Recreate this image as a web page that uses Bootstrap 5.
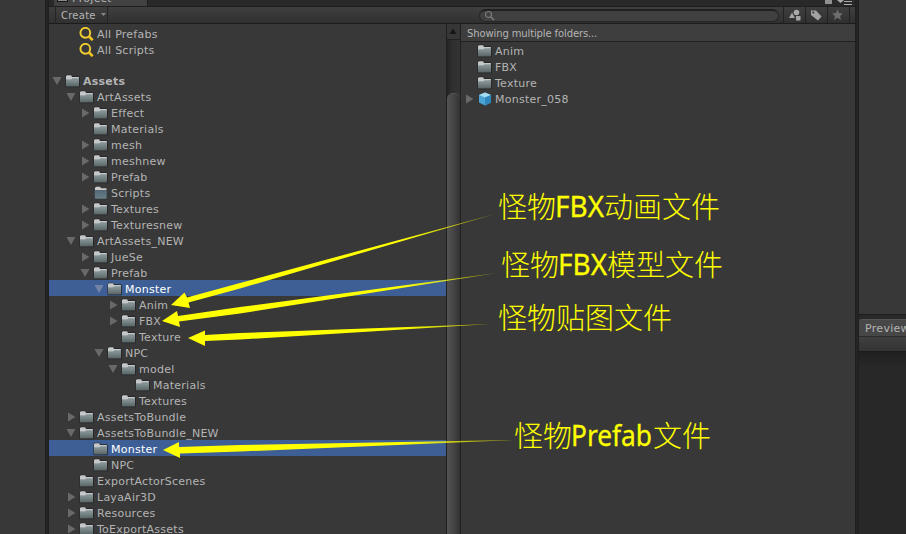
<!DOCTYPE html>
<html lang="zh-CN">
<head>
<meta charset="utf-8">
<title>Project</title>
<link href="https://cdn.jsdelivr.net/npm/bootstrap@5.3.0/dist/css/bootstrap.min.css" rel="stylesheet">
<style>
body{width:906px;height:534px;background:#383838;color:#b4b4b4;font:11px/16px "DejaVu Sans",sans-serif;letter-spacing:.25px}
.side{width:45px}
.side,.split,.panel,.tools>*{flex:none}
.split{width:4px;background:#242424;border-left:1px solid #202020;border-right:1px solid #202020}
.panel{width:806px}
.tabs{height:6px;background:#292929;padding-left:5px}
.tab-a{width:94px;height:6px;background:#424242;border-right:1px solid #1d1d1d;line-height:14px;padding-left:3px}
.tab-a span{margin-top:-8px;margin-left:4px;letter-spacing:.3px}
.tab-a i{width:11px;height:2px;background:#8a8a8a;border:1px solid #161616;border-top:0}
.tools{height:18px;background:linear-gradient(#3f3f3f,#303030);border-top:1px solid #1f1f1f;border-bottom:1px solid #1c1c1c;font-size:10px}
.create{width:53px;margin-left:6px;padding-left:5px;border-left:1px solid #252525;border-right:1px solid #252525;height:16px}
.create span{position:relative;top:1px}
.search{width:300px;height:13px;margin:2px 4px 0 371px;border-radius:7px;background:#404040;border:1px solid #252525;border-top:2px solid #202020}
.tbtn{width:22px;height:16px;border-left:1px solid #222}
.tbtn.end{width:6px}
.tree{width:397px;padding-top:1px}
.item{height:16px;flex:none;white-space:nowrap;padding:2px 0 0 var(--in)}
.item span{margin-left:4px;position:relative;top:1px}
.l0{--in:3px}.l1{--in:17px}.l2{--in:31px}.l3{--in:45px}.l4{--in:59px}.l5{--in:73px}
.gap-row{height:15px;flex:none}
.picked{background:#3e5f96;color:#fff}
.tw{width:10px;height:10px;margin-right:3px;flex:none;fill:#696969}
.picked .tw{fill:#7184a5}
.fi{width:15px;height:14px;flex:none;margin-right:-1px}
.bar{width:15px;flex:none;background:linear-gradient(90deg,#242424,#2f2f2f 40%,#333);border-left:1px solid #202020;border-right:1px solid #202020}
.bar-up{height:16px;background:#363636;border-bottom:1px solid #222}
.bar-gap{height:53px}
.thumb{border-radius:6px 6px 0 0;background:linear-gradient(90deg,#535353,#464646 45%,#333);border-top:1px solid #555}
.list{width:394px}
.list-h{height:18px;background:#3e3e3e;border-bottom:1px solid #202020;padding:2px 0 0 6px;font-size:10px;line-height:16px;letter-spacing:-.12px}
.rtop{height:315px;border-bottom:1px solid #1c1c1c}
.rgap{height:4px;background:#292929}
.pv{height:17px;background:#474747;border-top:1px solid #555;border-radius:4px 0 0 0;padding:1px 0 0 6px;letter-spacing:.3px;white-space:nowrap}
.pvbar{height:16px;background:linear-gradient(#404040,#333);border-top:1px solid #2b2b2b;border-bottom:1px solid #1c1c1c}
.pvbody{background:linear-gradient(#202020,#282828 16px)}
.note text{font-family:"Noto Sans","Noto Sans CJK SC",sans-serif;font-size:29px;fill:#ff0;stroke:#ff0;stroke-width:.3;letter-spacing:0}
.note .cj{font-family:"Noto Sans CJK SC",sans-serif;font-weight:300;stroke:none}
</style>
</head>
<body class="d-flex overflow-hidden position-relative m-0">
<svg width="0" height="0" class="position-absolute">
<defs>
<linearGradient id="fg" x1="0" y1="0" x2="0" y2="1"><stop offset="0" stop-color="#8c999b"/><stop offset="1" stop-color="#566264"/></linearGradient>
<linearGradient id="fs" x1="0" y1="0" x2="0" y2="1"><stop offset="0" stop-color="#53697a"/><stop offset="1" stop-color="#6c7f88"/></linearGradient>
<symbol id="fo" viewBox="0 0 15 14"><path d="M.5 3.500 1.500.8h5l1 1.500h6.500l.7 1v9.900h-14.200z" fill="#222"/><path d="M1 4V2.200L2 1.300h4.200l.8 1.600h6.900V7H1z" fill="#c4c8c8"/><path d="M1 6h5l1-1h7v7.600H1z" fill="url(#fg)"/><path d="M1 5.800h5.300l1-1h6.700" stroke="#78878a" stroke-width=".8" fill="none"/></symbol>
<symbol id="fp" viewBox="0 0 15 14"><path d="M2 7V2L3 .8h4l1 1.400h5.500V7z" fill="#cacaca"/><path d="M1.200 4.500H14.300L13.800 13h-12z" fill="url(#fs)" stroke="#2a3035" stroke-width=".5"/></symbol>
<symbol id="dn" viewBox="0 0 10 10"><path d="M.5 1h9L5 9z"/></symbol>
<symbol id="rt" viewBox="0 0 10 10"><path d="M2 .5v9L9.500 5z"/></symbol>
<symbol id="no" viewBox="0 0 10 10"></symbol>
<symbol id="mg" viewBox="0 0 15 14"><circle cx="6.300" cy="5.800" r="4.900" fill="none" stroke="#f2cf31" stroke-width="1.900"/><path d="m10 9.500 3.700 3.700" stroke="#f2c51f" stroke-width="2.600"/></symbol>
</defs>
</svg>
<div class="side"></div>
<div class="split"></div>
<main class="panel d-flex flex-column">
  <div class="tabs d-flex justify-content-between overflow-hidden">
    <div class="tab-a d-flex overflow-hidden"><i></i><span>Project</span></div>
    <svg width="31" height="6" class="me-0"><path d="M1 0h7v4H1z" fill="#8f8f8f"/><path d="M13 0h7l-3.500 3z" fill="#aaa"/><path d="M20 1.500h8M20 4.500h8" stroke="#aaa"/></svg>
  </div>
  <div class="tools d-flex">
    <div class="create d-flex align-items-center"><span>Create</span><svg width="6" height="4" class="ms-1"><path d="M1 0h5L3.500 3z" fill="#888"/></svg></div>
    <div class="search d-flex align-items-center"><svg width="12" height="12" class="ms-1"><circle cx="4.500" cy="4.500" r="3" fill="none" stroke="#7b7b7b" stroke-width="1.200"/><path d="m7 7 3 3" stroke="#7b7b7b" stroke-width="1.500"/></svg></div>
    <div class="tbtn"><svg width="22" height="16" class="d-block"><circle cx="12.500" cy="5.500" r="2.800" fill="#aaa"/><path d="M5 11 8 5.500l3 5.500zM12 9h4.500v4.500H12z" fill="#a5a5a5"/></svg></div>
    <div class="tbtn"><svg width="22" height="16" class="d-block"><path d="M5 3.500h5L15.500 9.500 12 13.500 5 8z" fill="#a2a2a2"/><circle cx="7.300" cy="5.500" r="1" fill="#333"/></svg></div>
    <div class="tbtn"><svg width="22" height="16" class="d-block"><path d="m9.500 2.500 1.500 3.600 4 .3-3 2.600 1 4-3.500-2.200-3.500 2.200 1-4-3-2.600 4-.3z" fill="#6e6e6e"/></svg></div>
    <div class="tbtn end"></div>
  </div>
  <div class="d-flex flex-grow-1 overflow-hidden">
    <div class="tree d-flex flex-column overflow-hidden">
      <div class="item l1 d-flex align-items-center"><svg class="tw"><use href="#no"/></svg><svg class="fi"><use href="#mg"/></svg><span>All Prefabs</span></div>
      <div class="item l1 d-flex align-items-center"><svg class="tw"><use href="#no"/></svg><svg class="fi"><use href="#mg"/></svg><span>All Scripts</span></div>
      <div class="gap-row"></div>
      <div class="item l0 d-flex align-items-center fw-bold"><svg class="tw"><use href="#dn"/></svg><svg class="fi"><use href="#fo"/></svg><span>Assets</span></div>
      <div class="item l1 d-flex align-items-center"><svg class="tw"><use href="#dn"/></svg><svg class="fi"><use href="#fo"/></svg><span>ArtAssets</span></div>
      <div class="item l2 d-flex align-items-center"><svg class="tw"><use href="#rt"/></svg><svg class="fi"><use href="#fo"/></svg><span>Effect</span></div>
      <div class="item l2 d-flex align-items-center"><svg class="tw"><use href="#no"/></svg><svg class="fi"><use href="#fo"/></svg><span>Materials</span></div>
      <div class="item l2 d-flex align-items-center"><svg class="tw"><use href="#rt"/></svg><svg class="fi"><use href="#fo"/></svg><span>mesh</span></div>
      <div class="item l2 d-flex align-items-center"><svg class="tw"><use href="#rt"/></svg><svg class="fi"><use href="#fo"/></svg><span>meshnew</span></div>
      <div class="item l2 d-flex align-items-center"><svg class="tw"><use href="#rt"/></svg><svg class="fi"><use href="#fo"/></svg><span>Prefab</span></div>
      <div class="item l2 d-flex align-items-center"><svg class="tw"><use href="#no"/></svg><svg class="fi"><use href="#fp"/></svg><span>Scripts</span></div>
      <div class="item l2 d-flex align-items-center"><svg class="tw"><use href="#rt"/></svg><svg class="fi"><use href="#fo"/></svg><span>Textures</span></div>
      <div class="item l2 d-flex align-items-center"><svg class="tw"><use href="#rt"/></svg><svg class="fi"><use href="#fo"/></svg><span>Texturesnew</span></div>
      <div class="item l1 d-flex align-items-center"><svg class="tw"><use href="#dn"/></svg><svg class="fi"><use href="#fo"/></svg><span>ArtAssets_NEW</span></div>
      <div class="item l2 d-flex align-items-center"><svg class="tw"><use href="#rt"/></svg><svg class="fi"><use href="#fo"/></svg><span>JueSe</span></div>
      <div class="item l2 d-flex align-items-center"><svg class="tw"><use href="#dn"/></svg><svg class="fi"><use href="#fo"/></svg><span>Prefab</span></div>
      <div class="item l3 d-flex align-items-center picked"><svg class="tw"><use href="#dn"/></svg><svg class="fi"><use href="#fo"/></svg><span>Monster</span></div>
      <div class="item l4 d-flex align-items-center"><svg class="tw"><use href="#rt"/></svg><svg class="fi"><use href="#fo"/></svg><span>Anim</span></div>
      <div class="item l4 d-flex align-items-center"><svg class="tw"><use href="#rt"/></svg><svg class="fi"><use href="#fo"/></svg><span>FBX</span></div>
      <div class="item l4 d-flex align-items-center"><svg class="tw"><use href="#no"/></svg><svg class="fi"><use href="#fo"/></svg><span>Texture</span></div>
      <div class="item l3 d-flex align-items-center"><svg class="tw"><use href="#dn"/></svg><svg class="fi"><use href="#fo"/></svg><span>NPC</span></div>
      <div class="item l4 d-flex align-items-center"><svg class="tw"><use href="#dn"/></svg><svg class="fi"><use href="#fo"/></svg><span>model</span></div>
      <div class="item l5 d-flex align-items-center"><svg class="tw"><use href="#no"/></svg><svg class="fi"><use href="#fo"/></svg><span>Materials</span></div>
      <div class="item l4 d-flex align-items-center"><svg class="tw"><use href="#no"/></svg><svg class="fi"><use href="#fo"/></svg><span>Textures</span></div>
      <div class="item l1 d-flex align-items-center"><svg class="tw"><use href="#rt"/></svg><svg class="fi"><use href="#fo"/></svg><span>AssetsToBundle</span></div>
      <div class="item l1 d-flex align-items-center"><svg class="tw"><use href="#dn"/></svg><svg class="fi"><use href="#fo"/></svg><span>AssetsToBundle_NEW</span></div>
      <div class="item l2 d-flex align-items-center picked"><svg class="tw"><use href="#no"/></svg><svg class="fi"><use href="#fo"/></svg><span>Monster</span></div>
      <div class="item l2 d-flex align-items-center"><svg class="tw"><use href="#no"/></svg><svg class="fi"><use href="#fo"/></svg><span>NPC</span></div>
      <div class="item l1 d-flex align-items-center"><svg class="tw"><use href="#no"/></svg><svg class="fi"><use href="#fo"/></svg><span>ExportActorScenes</span></div>
      <div class="item l1 d-flex align-items-center"><svg class="tw"><use href="#rt"/></svg><svg class="fi"><use href="#fo"/></svg><span>LayaAir3D</span></div>
      <div class="item l1 d-flex align-items-center"><svg class="tw"><use href="#rt"/></svg><svg class="fi"><use href="#fo"/></svg><span>Resources</span></div>
      <div class="item l1 d-flex align-items-center"><svg class="tw"><use href="#rt"/></svg><svg class="fi"><use href="#fo"/></svg><span>ToExportAssets</span></div>
    </div>
    <div class="bar d-flex flex-column">
      <div class="bar-up"><svg width="12" height="15" class="d-block"><path d="M2.500 10h7L6 4.500z" fill="#161616"/></svg></div>
      <div class="bar-gap"></div>
      <div class="thumb flex-grow-1"></div>
    </div>
    <div class="list">
      <div class="list-h">Showing multiple folders...</div>
      <div class="item l0 d-flex align-items-center"><svg class="tw"><use href="#no"/></svg><svg class="fi"><use href="#fo"/></svg><span>Anim</span></div>
      <div class="item l0 d-flex align-items-center"><svg class="tw"><use href="#no"/></svg><svg class="fi"><use href="#fo"/></svg><span>FBX</span></div>
      <div class="item l0 d-flex align-items-center"><svg class="tw"><use href="#no"/></svg><svg class="fi"><use href="#fo"/></svg><span>Texture</span></div>
      <div class="item l0 d-flex align-items-center"><svg class="tw"><use href="#rt"/></svg><svg class="fi" viewBox="0 0 15 14"><path d="m8 .5 6 2.500v7.500L8 13.500l-6-3V3z" fill="#4ba3d4"/><path d="m8 .5 6 2.500-6 2.500L2 3z" fill="#a4dcf4"/><path d="M8 5.500 14 3v7.500l-6 3z" fill="#2f86bc"/></svg><span>Monster_058</span></div>
    </div>
  </div>
</main>
<div class="split"></div>
<aside class="flex-grow-1 d-flex flex-column overflow-hidden">
  <div class="rtop"></div>
  <div class="rgap"></div>
  <div class="pv">Preview</div>
  <div class="pvbar"></div>
  <div class="pvbody flex-grow-1"></div>
</aside>
<svg class="note position-absolute top-0 start-0" width="906" height="534">
  <defs>
    <linearGradient id="fade" gradientUnits="userSpaceOnUse" x1="400" y1="0" x2="500" y2="0"><stop offset="0" stop-color="#ff0"/><stop offset="1" stop-color="#ff0" stop-opacity=".5"/></linearGradient>
  </defs>
  <g fill="url(#fade)">
    <path d="M171 305 184.500 292.500 187 297.500 240 283 495 214 240 288.500 188.500 302.500 190 308z"/>
    <path d="M162 321 177 311 178 316 240 307 497 273 240 313.500 179 321.500 180 327z"/>
    <path d="M188 338 205 330.500V335L240 333 491 324 240 339.500 205 341V346z"/>
    <path d="M163 450 179 442V447L240 445 513 440 240 451.500 180 453.500V458z"/>
  </g>
  <text class="cj" x="498" y="218" textLength="58">怪物</text><text x="555" y="217" textLength="49" lengthAdjust="spacingAndGlyphs">FBX</text><text class="cj" x="604" y="218" textLength="116">动画文件</text>
  <text class="cj" x="501" y="276" textLength="58">怪物</text><text x="558" y="275" textLength="49" lengthAdjust="spacingAndGlyphs">FBX</text><text class="cj" x="607" y="276" textLength="116">模型文件</text>
  <text class="cj" x="498" y="329" textLength="174">怪物贴图文件</text>
  <text class="cj" x="514" y="447" textLength="58">怪物</text><text x="571" y="446" textLength="81" lengthAdjust="spacingAndGlyphs">Prefab</text><text class="cj" x="653" y="447" textLength="58">文件</text>
</svg>
</body>
</html>
